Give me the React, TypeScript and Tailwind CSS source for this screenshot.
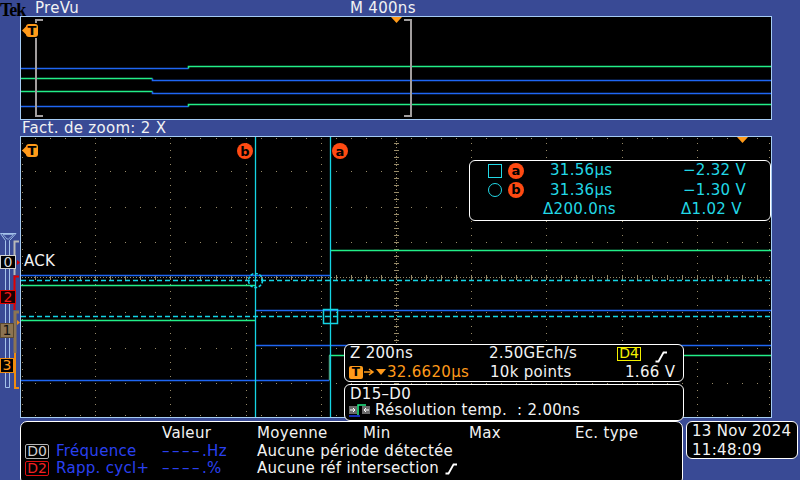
import React from 'react';

const CY = '#14d4e4';
const GREEN = '#22ee88';
const BLUE = '#1f66f2';
const ORANGE = '#ff9a1a';
const RED = '#ff4a12';

function gridPath(): string {
  let d = '';
  const dot = (x: number, y: number, w = 1, h = 1) => {
    d += `M${x} ${y}h${w}v${h}h${-w}z`;
  };
  const dx = 75.2, dy = 35.25, mx = dx / 5, my = dy / 5;
  for (let i = 1; i <= 9; i++) {
    if (i === 5) continue;
    const x = Math.round(20 + dx * i);
    for (let k = 1; k < 45; k++) {
      const y = Math.round(136 + my * k);
      if (y >= 416) break;
      dot(x, y);
    }
  }
  for (let j = 1; j <= 7; j++) {
    if (j === 4) continue;
    const y = Math.round(136 + dy * j);
    for (let k = 1; k < 55; k++) {
      const x = Math.round(20 + mx * k);
      if (x >= 770) break;
      dot(x, y);
    }
  }
  const cy = Math.round(136 + dy * 4);
  for (let x = 22; x < 770; x += 3) dot(x, cy);
  for (let k = 1; k < 55; k++) {
    const x = Math.round(20 + mx * k);
    if (x >= 770) break;
    dot(x, cy - 2, 1, 5);
  }
  const cx = Math.round(20 + dx * 5);
  for (let y = 138; y < 416; y += 3) dot(cx, y);
  for (let k = 1; k < 45; k++) {
    const y = Math.round(136 + my * k);
    if (y >= 416) break;
    dot(cx - 2, y, 5, 1);
  }
  for (let k = 1; k < 55; k++) {
    const x = Math.round(20 + mx * k);
    if (x >= 770) break;
    dot(x, 138);
    dot(x, 415);
  }
  for (let k = 1; k < 45; k++) {
    const y = Math.round(136 + my * k);
    if (y >= 416) break;
    dot(22, y);
    dot(769, y);
  }
  return d;
}

const TMarker = ({ x, y }: { x: number; y: number }) => (
  <g>
    <polygon points={`${x},${y + 6.5} ${x + 5},${y + 1.5} ${x + 5},${y + 11.5}`} fill={ORANGE} />
    <rect x={x + 4} y={y} width={12} height={13} rx={3} fill={ORANGE} />
    <text x={x + 10} y={y + 11} textAnchor="middle" fontFamily="DejaVu Sans" fontWeight="bold" fontSize="13" fill="#000">
      T
    </text>
  </g>
);

const CursorLabel = ({ x, y, l }: { x: number; y: number; l: string }) => (
  <g>
    <circle cx={x} cy={y} r={8} fill={RED} />
    <text x={x} y={y + 4.5} textAnchor="middle" fontFamily="DejaVu Sans" fontWeight="bold" fontSize="13" fill="#000">
      {l}
    </text>
  </g>
);

const Edge = ({ color = '#fff' }: { color?: string }) => (
  <svg width="13" height="12" viewBox="0 0 13 12" className="inline-block shrink-0">
    <path d="M0.5 10.5 H3.5 L8.5 1.5 H12" stroke={color} strokeWidth="1.8" fill="none" />
  </svg>
);

function Preview() {
  return (
    <svg width="750" height="102" viewBox="21 17 750 102" className="block">
      <path d="M21 68.5 H188.5" stroke={BLUE} strokeWidth="1.6" fill="none" />
      <path d="M188.5 68.5 V66.5 H771" stroke={GREEN} strokeWidth="1.6" fill="none" />
      <path d="M21 78.5 H152.5" stroke={GREEN} strokeWidth="1.6" fill="none" />
      <path d="M152.5 78.5 V80.5 H771" stroke={BLUE} strokeWidth="1.6" fill="none" />
      <path d="M21 91.5 H152.5" stroke={GREEN} strokeWidth="1.6" fill="none" />
      <path d="M152.5 91.5 V93.5 H771" stroke={BLUE} strokeWidth="1.6" fill="none" />
      <path d="M21 106.5 H188.5" stroke={BLUE} strokeWidth="1.6" fill="none" />
      <path d="M188.5 106.5 V104.5 H771" stroke={GREEN} strokeWidth="1.6" fill="none" />
      <path d="M43 20 H36 V116 H43" stroke="#a29e9e" strokeWidth="2" fill="none" />
      <path d="M404 20 H411 V116 H404" stroke="#a29e9e" strokeWidth="2" fill="none" />
      <rect x={20} y={23} width={20} height={15} fill="#000" />
      <TMarker x={22} y={24} />
      <polygon points="391,17 402,17 396.5,23" fill={ORANGE} />
    </svg>
  );
}

function MainScope() {
  const d = gridPath();
  return (
    <svg width="750" height="280" viewBox="21 137 750 280" className="block absolute left-0 top-0">
      <path d={d} fill="#978a68" />
      <g fill="none" strokeWidth="1.5">
        <path d="M330 250.5 H771" stroke={GREEN} />
        <path d="M21 275.5 H330" stroke={BLUE} />
        <path d="M21 285.5 H255" stroke={GREEN} />
        <path d="M255 310.5 H771" stroke={BLUE} />
        <path d="M21 320.5 H255" stroke={GREEN} />
        <path d="M255 345.5 H771" stroke={BLUE} />
        <path d="M329 355.5 H771" stroke={GREEN} />
        <path d="M329.5 355.5 V380.5" stroke="#4a9a78" />
        <path d="M21 380.5 H329" stroke={BLUE} />
      </g>
      <g fill="none" stroke={CY}>
        <path d="M255.5 137 V417" strokeWidth="1.3" />
        <path d="M330.5 137 V417" strokeWidth="1.3" />
        <path d="M21 280.5 H771" strokeWidth="1.5" strokeDasharray="5 3" />
        <path d="M21 316.5 H771" strokeWidth="1.5" strokeDasharray="5 3" />
        <circle cx={255.5} cy={280.5} r={7} strokeWidth="1.5" strokeDasharray="3 1.6" />
        <rect x={323.5} y={309.5} width={14} height={14} strokeWidth="1.5" />
      </g>
      <TMarker x={22} y={144} />
      <CursorLabel x={245} y={151} l="b" />
      <CursorLabel x={340} y={151} l="a" />
      <polygon points="737,137 748,137 742.5,143" fill={ORANGE} />
    </svg>
  );
}

function LeftStrip() {
  return (
    <div className="relative w-[20px] h-[282px]">
      <svg width="20" height="282" viewBox="0 136 20 282" className="block absolute left-0 top-0">
        <path d="M0.5 233.5 H16 L9.5 240.5 V387.5 H5.5 V240.5 Z" stroke="#a4c2ea" strokeWidth="1" fill="none" />
        <path d="M3 234.5 H13.5 L8.5 239 H7 Z" stroke="#a4c2ea" strokeWidth="0.8" fill="none" />
        <path d="M19 241.5 H14.5 V275" stroke="#b8b8b8" strokeWidth="2" fill="none" />
        <path d="M19 276.5 H14.5 V310" stroke="#e00000" strokeWidth="2" fill="none" />
        <path d="M19 312 H15 V353" stroke="#8c7452" strokeWidth="3" fill="none" />
        <path d="M15 353 V388 H19" stroke="#f08c10" strokeWidth="2" fill="none" />
        <polygon points="17,260 20,262.5 17,265" fill="#e00000" />
        <polygon points="17,320 20,322.5 17,325" fill="#f08c10" />
      </svg>
      <div className="absolute left-0 top-[119px] w-[16px] h-[14px] border border-[#d0d0d0] bg-black text-[#d8d8d8] text-[14px] leading-[12px] flex items-center justify-center">0</div>
      <div className="absolute left-0 top-[154px] w-[16px] h-[14px] border border-[#e00000] bg-[#1a0000] text-[#f01818] text-[14px] leading-[12px] flex items-center justify-center">2</div>
      <div className="absolute left-0 top-[187px] w-[14px] h-[15px] border border-[#5c4a30] bg-[#8c7452] text-[#111] text-[14px] leading-[13px] flex items-center justify-center">1</div>
      <div className="absolute left-0 top-[222px] w-[14px] h-[15px] border border-[#f08c10] bg-black text-[#ff9a1a] text-[14px] leading-[13px] flex items-center justify-center">3</div>
    </div>
  );
}

function ResIcon() {
  return (
    <svg width="22" height="14" viewBox="0 0 22 14" className="block shrink-0">
      <rect x="0" y="3" width="8" height="8" fill="#6a6a6a" />
      <path d="M1 7 H6 M4 5 L6 7 L4 9" stroke="#fff" strokeWidth="1" fill="none" />
      <path d="M9 12 V2 H17" stroke={GREEN} strokeWidth="1.5" fill="none" />
      <rect x="13" y="3" width="8" height="8" fill="#6a6a6a" />
      <path d="M20 7 H15 M17 5 L15 7 L17 9" stroke="#fff" strokeWidth="1" fill="none" />
      <path d="M0 13 H11" stroke="#1e3cf0" strokeWidth="1.5" />
    </svg>
  );
}

export default function App() {
  return (
    <div className="w-[800px] h-[480px] overflow-hidden bg-[#394a95] text-[#f2f2f2] font-['DejaVu_Sans',sans-serif] text-[15px] leading-[16px] tracking-[0.3px] flex flex-col">
      {/* header */}
      <div className="h-[16px] grid grid-cols-[35px_315px_120px] items-start">
        <span className="pt-[1px] font-['Liberation_Serif',serif] font-bold text-[18px] leading-[18px] tracking-[-1px] text-black whitespace-nowrap">Tek</span>
        <span>PreVu</span>
        <span>M 400ns</span>
      </div>

      {/* preview */}
      <div className="pl-[20px]">
        <div className="w-[752px] h-[104px] border border-[#a6ccf4] bg-black">
          <Preview />
        </div>
      </div>

      <div className="h-[16px] pl-[22px]">Fact. de zoom: 2 X</div>

      {/* main area */}
      <div className="flex h-[282px]">
        <LeftStrip />
        <div className="relative w-[752px] h-[282px] border border-[#a6ccf4] bg-black">
          <MainScope />
          <div className="absolute left-[3px] top-[116px]">ACK</div>

          {/* cursor readout */}
          <div className="absolute left-[448px] top-[23px] w-[302px] h-[61px] border border-white rounded-[6px] bg-black text-[#22d8e6] leading-[19.5px]">
            <div className="flex items-center pl-[18px]">
              <span className="w-[14px] h-[14px] border-[1.5px] border-[#22d8e6]" />
              <span className="ml-[6px] w-[16px] h-[16px] rounded-full bg-[#ff4a12] text-black font-bold text-[13px] leading-[16px] flex justify-center">a</span>
              <span className="ml-[26px] w-[133px]">31.56µs</span>
              <span>−2.32 V</span>
            </div>
            <div className="flex items-center pl-[18px]">
              <span className="w-[14px] h-[14px] border-[1.5px] border-[#22d8e6] rounded-full" />
              <span className="ml-[6px] w-[16px] h-[16px] rounded-full bg-[#ff4a12] text-black font-bold text-[13px] leading-[16px] flex justify-center">b</span>
              <span className="ml-[26px] w-[133px]">31.36µs</span>
              <span>−1.30 V</span>
            </div>
            <div className="flex items-center pl-[73px]">
              <span className="w-[138px]">Δ200.0ns</span>
              <span>Δ1.02 V</span>
            </div>
          </div>

          {/* info box 1 */}
          <div className="absolute left-[323px] top-[207px] w-[340px] h-[38px] border border-white rounded-[6px] bg-black leading-[16px]">
            <div className="flex items-start pl-[5px]">
              <span className="w-[139px]">Z 200ns</span>
              <span className="w-[128px]">2.50GEch/s</span>
              <span className="mt-[2px] w-[24px] h-[14px] border-[1.5px] border-[#f4f000] text-[#f4f000] text-[14px] leading-[11px] tracking-[0px] flex justify-center">D4</span>
              <span className="ml-[14px] mt-[3px]"><Edge /></span>
            </div>
            <div className="flex items-center pl-[4px]">
              <span className="w-[141px] flex items-center text-[#ff9a1a]">
                <span className="w-[14px] h-[13px] rounded-[2px] bg-[#ff9a1a] text-black font-bold text-[12px] leading-[13px] flex justify-center">T</span>
                <svg width="12" height="10" viewBox="0 0 12 10" className="block shrink-0">
                  <path d="M1 5 H9 M6 2 L10 5 L6 8" stroke="#ff9a1a" strokeWidth="1.5" fill="none" />
                </svg>
                <svg width="12" height="10" viewBox="0 0 12 10" className="block shrink-0">
                  <polygon points="1,2 11,2 6,8" fill="#ff9a1a" />
                </svg>
                <span>32.6620µs</span>
              </span>
              <span className="w-[135px]">10k points</span>
              <span>1.66 V</span>
            </div>
          </div>

          {/* info box 2 */}
          <div className="absolute left-[323px] top-[247px] w-[340px] h-[37px] border border-white rounded-[6px] bg-black pt-[1px] leading-[16px]">
            <div className="pl-[5px]">D15–D0</div>
            <div className="flex items-center pl-[4px]">
              <ResIcon />
              <span className="ml-[4px] whitespace-pre">Résolution temp.  : 2.00ns</span>
            </div>
          </div>
        </div>
      </div>

      {/* bottom */}
      <div className="mt-[3px] flex items-start">
        <div className="ml-[20px] w-[663px] h-[64px] border border-white rounded-[7px] bg-black pt-[3px] pl-[4px] leading-[17.5px]">
          <div className="grid grid-cols-[31px_106px_95px_106px_106px_106px_100px] whitespace-nowrap">
            <span />
            <span />
            <span>Valeur</span>
            <span>Moyenne</span>
            <span>Min</span>
            <span>Max</span>
            <span>Ec. type</span>

            <span className="flex items-center h-[17.5px]">
              <span className="w-[24px] h-[15px] border border-[#b4b4b4] rounded-[2px] text-[#cfcfcf] text-[14px] leading-[13px] tracking-[0px] flex justify-center">D0</span>
            </span>
            <span className="text-[#2a40f0]">Fréquence</span>
            <span className="text-[#2a40f0]"><span className="tracking-[2.5px]">––––</span>.Hz</span>
            <span>Aucune période détectée</span>
            <span />
            <span />
            <span />

            <span className="flex items-center h-[17.5px]">
              <span className="w-[24px] h-[15px] border border-[#e01010] rounded-[2px] text-[#f02020] text-[14px] leading-[13px] tracking-[0px] flex justify-center">D2</span>
            </span>
            <span className="text-[#2a40f0]">Rapp. cycl+</span>
            <span className="text-[#2a40f0]"><span className="tracking-[2.5px]">––––</span>.%</span>
            <span className="flex items-center gap-[6px] overflow-visible"><span className="shrink-0">Aucune réf intersection</span><Edge /></span>
            <span />
            <span />
            <span />
          </div>
        </div>
        <div className="ml-[3px] w-[112px] h-[38px] border border-white rounded-[6px] bg-black pl-[5px] leading-[19px]">
          <div>13 Nov 2024</div>
          <div>11:48:09</div>
        </div>
      </div>
    </div>
  );
}
